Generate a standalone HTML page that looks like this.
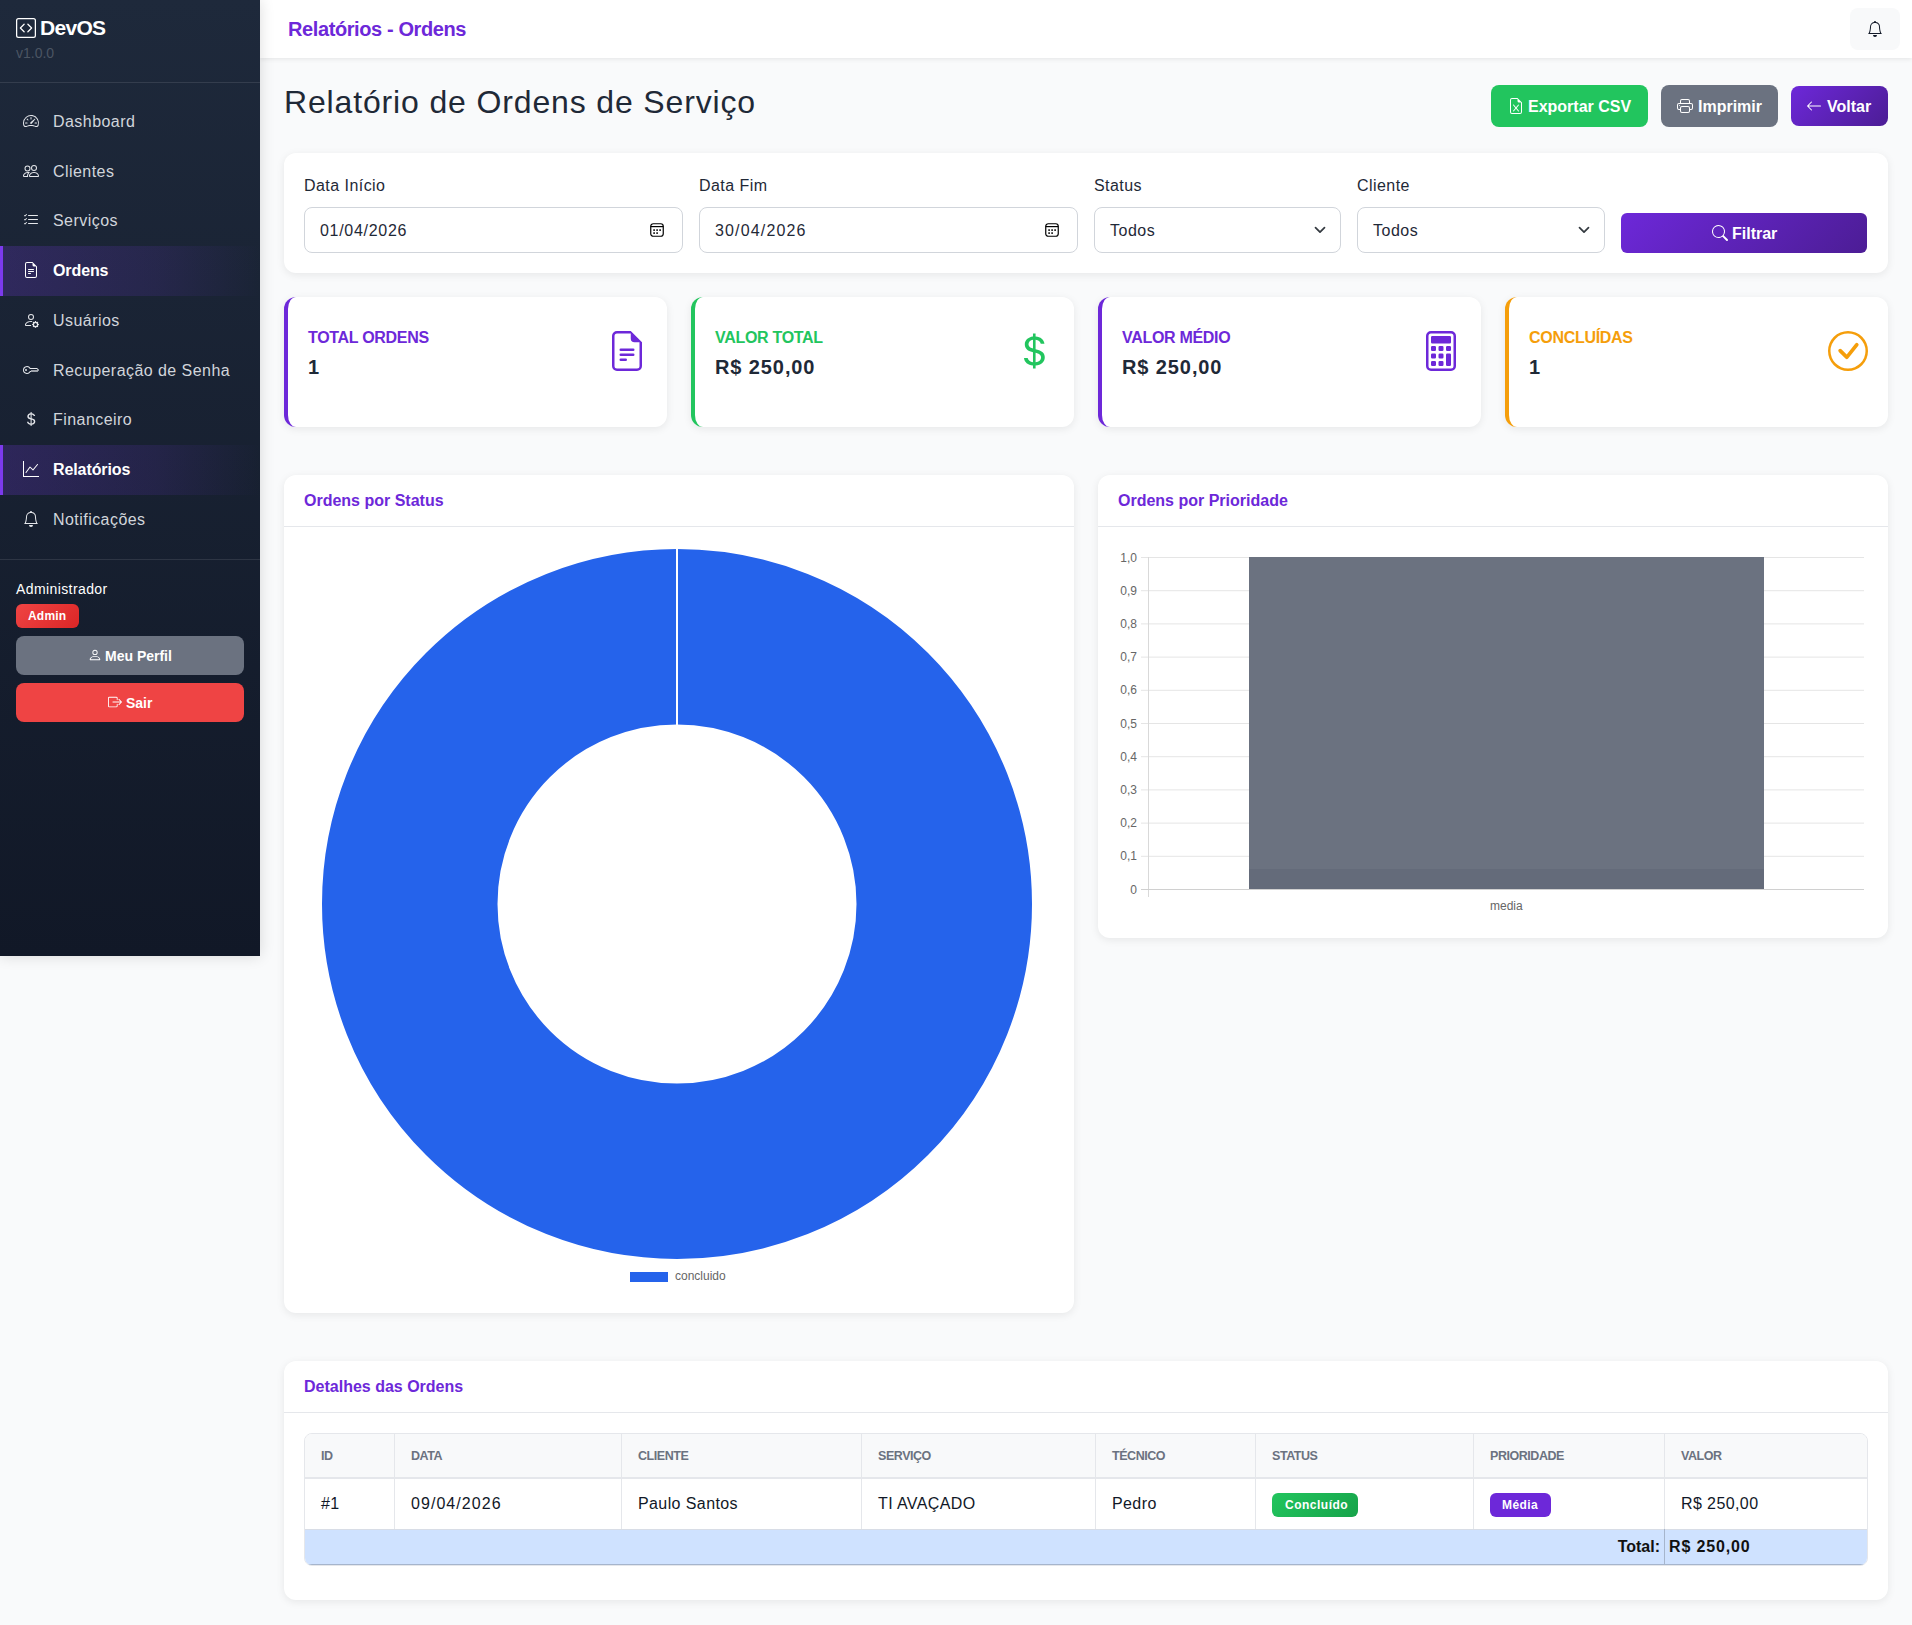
<!DOCTYPE html><html><head><meta charset="utf-8"><style>
*{box-sizing:border-box;margin:0;padding:0}
html,body{width:1912px;height:1625px;overflow:hidden}
body{font-family:"Liberation Sans",sans-serif;background:#f9fafb;color:#1f2937;position:relative}
.abs{position:absolute;white-space:nowrap}
.ic{position:absolute;overflow:visible}
#sb{position:absolute;left:0;top:0;width:260px;height:956px;background:linear-gradient(180deg,#1e293b 0%,#111827 100%);box-shadow:0 0 14px rgba(0,0,0,.14);z-index:5}
.hr{position:absolute;left:0;width:260px;height:1px;background:rgba(255,255,255,.1)}
.nav{position:absolute;left:0;width:260px;height:49.75px;color:#d1d5db;font-size:16px}
.nav .t{position:absolute;left:53px;top:16px;line-height:18px;letter-spacing:.45px;white-space:nowrap}
.nav.act{background:linear-gradient(90deg,rgba(124,58,237,.22) 0%,rgba(124,58,237,.12) 60%,rgba(124,58,237,0) 100%);color:#fff;font-weight:700}
.nav.act .t{letter-spacing:-.1px}
.nav.act:before{content:"";position:absolute;left:0;top:0;width:3px;height:100%;background:#7c3aed}
.btnsb{position:absolute;left:16px;width:228px;height:39px;border-radius:8px;color:#fff;font-size:14px;font-weight:700}
#hd{position:absolute;left:260px;top:0;width:1652px;height:58px;background:#fff;box-shadow:0 1px 5px rgba(0,0,0,.09);z-index:4}
.btn{position:absolute;height:42px;border-radius:8px;color:#fff;font-size:16px;font-weight:700}
.card{position:absolute;background:#fff;border-radius:12px;box-shadow:0 2px 8px rgba(0,0,0,.08)}
.lbl{position:absolute;top:177px;font-size:16px;color:#1f2937;line-height:18px;white-space:nowrap;letter-spacing:.45px}
.inp{position:absolute;top:207px;height:46px;border:1px solid #d1d5db;border-radius:8px;background:#fff}
.inp .v{position:absolute;left:15px;top:14px;font-size:16px;line-height:18px;color:#1f2937;letter-spacing:.7px}
.stat{position:absolute;top:297px;width:383px;height:130px;background:#fff;border-radius:12px;box-shadow:0 2px 8px rgba(0,0,0,.08);overflow:hidden}
.stat .bar{position:absolute;left:0;top:0;width:4px;height:130px}
.stat .l{position:absolute;left:20px;top:32px;font-size:16px;font-weight:700;line-height:18px;white-space:nowrap;letter-spacing:-.3px}
.stat .v{position:absolute;left:20px;top:59px;font-size:20px;font-weight:700;color:#1f2937;line-height:22px;white-space:nowrap;letter-spacing:.9px}
.ch .t{position:absolute;left:20px;top:17px;font-size:16px;font-weight:700;color:#6d28d9;line-height:18px;white-space:nowrap}
.ch .b{position:absolute;left:0;top:51px;width:100%;height:1px;background:#e5e7eb}
.cell{position:absolute;white-space:nowrap}
</style></head><body>
<div id="sb">
<svg class="ic" style="left:16px;top:18px;" width="20" height="20" viewBox="0 0 16 16" fill="#fff"><path d="M14 1a1 1 0 0 1 1 1v12a1 1 0 0 1-1 1H2a1 1 0 0 1-1-1V2a1 1 0 0 1 1-1zM2 0a2 2 0 0 0-2 2v12a2 2 0 0 0 2 2h12a2 2 0 0 0 2-2V2a2 2 0 0 0-2-2z"/><path d="M6.854 4.646a.5.5 0 0 1 0 .708L4.207 8l2.647 2.646a.5.5 0 0 1-.708.708l-3-3a.5.5 0 0 1 0-.708l3-3a.5.5 0 0 1 .708 0m2.292 0a.5.5 0 0 0 0 .708L11.793 8l-2.647 2.646a.5.5 0 0 0 .708.708l3-3a.5.5 0 0 0 0-.708l-3-3a.5.5 0 0 0-.708 0"/></svg>
<div class="abs" style="left:40px;top:16px;font-size:21px;font-weight:700;color:#fff;line-height:24px;letter-spacing:-.7px">DevOS</div>
<div class="abs" style="left:16px;top:45px;font-size:14px;color:#4b5563;line-height:16px">v1.0.0</div>
<div class="hr" style="top:82px"></div>
<div class="nav" style="top:96.75px"><svg class="ic" style="left:23px;top:16px;" width="16" height="16" viewBox="0 0 16 16" fill="#e5e7eb"><path d="M8 4a.5.5 0 0 1 .5.5V6a.5.5 0 0 1-1 0V4.5A.5.5 0 0 1 8 4M3.732 5.732a.5.5 0 0 1 .707 0l.915.914a.5.5 0 1 1-.708.708l-.914-.915a.5.5 0 0 1 0-.707M2 10a.5.5 0 0 1 .5-.5h1.586a.5.5 0 0 1 0 1H2.5A.5.5 0 0 1 2 10m9.5 0a.5.5 0 0 1 .5-.5h1.5a.5.5 0 0 1 0 1H12a.5.5 0 0 1-.5-.5m.754-4.246a.39.39 0 0 0-.527-.02L7.547 9.31a.91.91 0 1 0 1.302 1.258l3.434-4.297a.39.39 0 0 0-.029-.518z"/><path d="M0 10a8 8 0 1 1 15.547 2.661c-.442 1.253-1.845 1.602-2.932 1.25C11.309 13.488 9.475 13 8 13c-1.474 0-3.31.488-4.615.911-1.087.352-2.49.003-2.932-1.25A8 8 0 0 1 0 10m8-7a7 7 0 0 0-6.603 9.329c.203.575.923.876 1.68.63C4.397 12.533 6.358 12 8 12s3.604.532 4.923.96c.757.245 1.477-.056 1.68-.631A7 7 0 0 0 8 3"/></svg><span class="t">Dashboard</span></div>
<div class="nav" style="top:146.5px"><svg class="ic" style="left:23px;top:16px;" width="16" height="16" viewBox="0 0 16 16" fill="#e5e7eb"><path d="M15 14s1 0 1-1-1-4-5-4-5 3-5 4 1 1 1 1zm-7.978-1L7 12.996c.001-.264.167-1.03.76-1.72C8.312 10.629 9.282 10 11 10c1.717 0 2.687.63 3.24 1.276.593.69.758 1.457.76 1.72l-.008.002-.014.002zM11 7a2 2 0 1 0 0-4 2 2 0 0 0 0 4m3-2a3 3 0 1 1-6 0 3 3 0 0 1 6 0M6.936 9.28a6 6 0 0 0-1.23-.247A7 7 0 0 0 5 9c-4 0-5 3-5 4q0 1 1 1h4.216A2.24 2.24 0 0 1 5 13c0-1.01.377-2.042 1.09-2.904.243-.294.526-.569.846-.816M4.92 10A5.5 5.5 0 0 0 4 13H1c0-.26.164-1.03.76-1.724.545-.636 1.492-1.256 3.16-1.275ZM1.5 5.5a3 3 0 1 1 6 0 3 3 0 0 1-6 0m3-2a2 2 0 1 0 0 4 2 2 0 0 0 0-4"/></svg><span class="t">Clientes</span></div>
<div class="nav" style="top:196.25px"><svg class="ic" style="left:23px;top:16px;" width="16" height="16" viewBox="0 0 16 16" fill="#e5e7eb"><path d="M5 11.5a.5.5 0 0 1 .5-.5h9a.5.5 0 0 1 0 1h-9a.5.5 0 0 1-.5-.5m0-4a.5.5 0 0 1 .5-.5h9a.5.5 0 0 1 0 1h-9a.5.5 0 0 1-.5-.5m0-4a.5.5 0 0 1 .5-.5h9a.5.5 0 0 1 0 1h-9a.5.5 0 0 1-.5-.5M3.854 2.146a.5.5 0 0 1 0 .708l-1.5 1.5a.5.5 0 0 1-.708 0l-.5-.5a.5.5 0 1 1 .708-.708L2 3.293l1.146-1.147a.5.5 0 0 1 .708 0m0 4a.5.5 0 0 1 0 .708l-1.5 1.5a.5.5 0 0 1-.708 0l-.5-.5a.5.5 0 1 1 .708-.708L2 7.293l1.146-1.147a.5.5 0 0 1 .708 0m0 4a.5.5 0 0 1 0 .708l-1.5 1.5a.5.5 0 0 1-.708 0l-.5-.5a.5.5 0 0 1 .708-.708l.146.147 1.146-1.147a.5.5 0 0 1 .708 0"/></svg><span class="t">Serviços</span></div>
<div class="nav act" style="top:246.0px"><svg class="ic" style="left:23px;top:16px;" width="16" height="16" viewBox="0 0 16 16" fill="#fff"><path d="M5.5 7a.5.5 0 0 0 0 1h5a.5.5 0 0 0 0-1zM5 9.5a.5.5 0 0 1 .5-.5h5a.5.5 0 0 1 0 1h-5a.5.5 0 0 1-.5-.5m0 2a.5.5 0 0 1 .5-.5h2a.5.5 0 0 1 0 1h-2a.5.5 0 0 1-.5-.5"/><path d="M9.5 0H4a2 2 0 0 0-2 2v12a2 2 0 0 0 2 2h8a2 2 0 0 0 2-2V4.5zm0 1v2A1.5 1.5 0 0 0 11 4.5h2V14a1 1 0 0 1-1 1H4a1 1 0 0 1-1-1V2a1 1 0 0 1 1-1z"/></svg><span class="t">Ordens</span></div>
<div class="nav" style="top:295.75px"><svg class="ic" style="left:23px;top:16px;" width="16" height="16" viewBox="0 0 16 16" fill="#e5e7eb"><path d="M11 5a3 3 0 1 1-6 0 3 3 0 0 1 6 0M8 7a2 2 0 1 0 0-4 2 2 0 0 0 0 4m.256 7a4.5 4.5 0 0 1-.229-1.004H3c.001-.246.154-.986.832-1.664C4.484 10.68 5.711 10 8 10q.39 0 .74.025c.226-.341.496-.65.804-.918Q8.844 9.002 8 9c-5 0-6 3-6 4s1 1 1 1zm3.63-4.54c.18-.613 1.048-.613 1.229 0l.043.148a.64.64 0 0 0 .921.382l.136-.074c.561-.306 1.175.308.87.869l-.075.136a.64.64 0 0 0 .382.92l.149.045c.612.18.612 1.048 0 1.229l-.15.043a.64.64 0 0 0-.38.921l.074.136c.305.561-.309 1.175-.87.87l-.136-.075a.64.64 0 0 0-.92.382l-.045.149c-.18.612-1.048.612-1.229 0l-.043-.15a.64.64 0 0 0-.921-.38l-.136.074c-.561.305-1.175-.309-.87-.87l.075-.136a.64.64 0 0 0-.382-.92l-.148-.045c-.613-.18-.613-1.048 0-1.229l.148-.043a.64.64 0 0 0 .382-.921l-.074-.136c-.306-.561.308-1.175.869-.87l.136.075a.64.64 0 0 0 .92-.382zM14 12.5a1.5 1.5 0 1 0-3 0 1.5 1.5 0 0 0 3 0"/></svg><span class="t">Usuários</span></div>
<div class="nav" style="top:345.5px"><svg class="ic" style="left:23px;top:16px;" width="16" height="16" viewBox="0 0 16 16" fill="#e5e7eb"><path d="M0 8a4 4 0 0 1 7.465-2H14a.5.5 0 0 1 .354.146l1.5 1.5a.5.5 0 0 1 0 .708l-1.5 1.5a.5.5 0 0 1-.708 0L13 9.207l-.646.647a.5.5 0 0 1-.708 0L11 9.207l-.646.647a.5.5 0 0 1-.708 0L9 9.207l-.646.647A.5.5 0 0 1 8 10h-.535A4 4 0 0 1 0 8m4-3a3 3 0 1 0 2.712 4.285A.5.5 0 0 1 7.163 9h.63l.853-.854a.5.5 0 0 1 .708 0l.646.647.646-.647a.5.5 0 0 1 .708 0l.646.647.646-.647a.5.5 0 0 1 .708 0l.646.647.793-.793-1-1h-6.63a.5.5 0 0 1-.451-.285A3 3 0 0 0 4 5"/><path d="M4 8a1 1 0 1 1-2 0 1 1 0 0 1 2 0"/></svg><span class="t">Recuperação de Senha</span></div>
<div class="nav" style="top:395.25px"><svg class="ic" style="left:23px;top:16px;" width="16" height="16" viewBox="0 0 16 16" fill="#e5e7eb"><path d="M4 10.781c.148 1.667 1.513 2.85 3.591 3.003V15h1.043v-1.216c2.27-.179 3.678-1.438 3.678-3.3 0-1.59-.947-2.51-2.956-3.028l-.722-.187V3.467c1.122.11 1.879.714 2.07 1.616h1.47c-.166-1.6-1.54-2.748-3.54-2.875V1H7.591v1.233c-1.939.23-3.27 1.472-3.27 3.156 0 1.454.966 2.483 2.661 2.917l.61.162v4.031c-1.149-.17-1.94-.8-2.131-1.718zm3.391-3.836c-1.043-.263-1.6-.825-1.6-1.616 0-.944.704-1.641 1.8-1.828v3.495l-.2-.05zm1.591 1.872c1.287.323 1.852.859 1.852 1.769 0 1.097-.826 1.828-2.2 1.939V8.73z"/></svg><span class="t">Financeiro</span></div>
<div class="nav act" style="top:445.0px"><svg class="ic" style="left:23px;top:16px;" width="16" height="16" viewBox="0 0 16 16" fill="#fff"><path d="M0 0h1v15h15v1H0zm14.817 3.113a.5.5 0 0 1 .07.704l-4.5 5.5a.5.5 0 0 1-.74.037L7.06 6.767l-3.656 5.027a.5.5 0 0 1-.808-.588l4-5.5a.5.5 0 0 1 .758-.06l2.609 2.61 4.15-5.073a.5.5 0 0 1 .704-.07"/></svg><span class="t">Relatórios</span></div>
<div class="nav" style="top:494.75px"><svg class="ic" style="left:23px;top:16px;" width="16" height="16" viewBox="0 0 16 16" fill="#e5e7eb"><path d="M8 16a2 2 0 0 0 2-2H6a2 2 0 0 0 2 2M8 1.918l-.797.161A4 4 0 0 0 4 6c0 .628-.134 2.197-.459 3.742-.16.767-.376 1.566-.663 2.258h10.244c-.287-.692-.502-1.49-.663-2.258C12.134 8.197 12 6.628 12 6a4 4 0 0 0-3.203-3.92zM14.22 12c.223.447.481.801.78 1H1c.299-.199.557-.553.78-1C2.68 10.2 3 6.88 3 6c0-2.42 1.72-4.44 4.005-4.901a1 1 0 1 1 1.99 0A5 5 0 0 1 13 6c0 .88.32 4.2 1.22 6"/></svg><span class="t">Notificações</span></div>
<div class="hr" style="top:559px"></div>
<div class="abs" style="left:16px;top:581px;font-size:14px;color:#fff;line-height:16px;letter-spacing:.4px">Administrador</div>
<div class="abs" style="left:16px;top:604px;width:63px;height:24px;border-radius:6px;background:linear-gradient(135deg,#ef4444,#dc2626)"></div>
<div class="abs" style="left:28px;top:609px;font-size:12px;font-weight:700;color:#fff;line-height:14px;letter-spacing:.2px">Admin</div>
<div class="btnsb" style="top:636px;background:#6b7280"></div>
<svg class="ic" style="left:88px;top:648px;" width="14" height="14" viewBox="0 0 16 16" fill="#fff"><path d="M8 8a3 3 0 1 0 0-6 3 3 0 0 0 0 6m2-3a2 2 0 1 1-4 0 2 2 0 0 1 4 0m4 8c0 1-1 1-1 1H3s-1 0-1-1 1-4 6-4 6 3 6 4m-1-.004c-.001-.246-.154-.986-.832-1.664C11.516 10.68 10.289 10 8 10s-3.516.68-4.168 1.332c-.678.678-.83 1.418-.832 1.664z"/></svg>
<div class="abs" style="left:105px;top:648px;font-size:14px;font-weight:700;color:#fff;line-height:16px">Meu Perfil</div>
<div class="btnsb" style="top:683px;background:#ef4444"></div>
<svg class="ic" style="left:108px;top:695px;" width="14" height="14" viewBox="0 0 16 16" fill="#fff"><path d="M10 12.5a.5.5 0 0 1-.5.5h-8a.5.5 0 0 1-.5-.5v-9a.5.5 0 0 1 .5-.5h8a.5.5 0 0 1 .5.5v2a.5.5 0 0 0 1 0v-2A1.5 1.5 0 0 0 9.5 2h-8A1.5 1.5 0 0 0 0 3.5v9A1.5 1.5 0 0 0 1.5 14h8a1.5 1.5 0 0 0 1.5-1.5v-2a.5.5 0 0 0-1 0z"/><path d="M15.854 8.354a.5.5 0 0 0 0-.708l-3-3a.5.5 0 0 0-.708.708L14.293 7.5H5.5a.5.5 0 0 0 0 1h8.793l-2.147 2.146a.5.5 0 0 0 .708.708z"/></svg>
<div class="abs" style="left:126px;top:695px;font-size:14px;font-weight:700;color:#fff;line-height:16px">Sair</div>
</div>
<div id="hd">
<div class="abs" style="left:28px;top:18px;font-size:20px;font-weight:700;color:#6d28d9;line-height:22px;letter-spacing:-.4px">Relatórios - Ordens</div>
<div class="abs" style="left:1590px;top:8px;width:50px;height:42px;background:#f8f9fa;border-radius:8px"></div>
<svg class="ic" style="left:1607px;top:21px;" width="16" height="16" viewBox="0 0 16 16" fill="#111827"><path d="M8 16a2 2 0 0 0 2-2H6a2 2 0 0 0 2 2M8 1.918l-.797.161A4 4 0 0 0 4 6c0 .628-.134 2.197-.459 3.742-.16.767-.376 1.566-.663 2.258h10.244c-.287-.692-.502-1.49-.663-2.258C12.134 8.197 12 6.628 12 6a4 4 0 0 0-3.203-3.92zM14.22 12c.223.447.481.801.78 1H1c.299-.199.557-.553.78-1C2.68 10.2 3 6.88 3 6c0-2.42 1.72-4.44 4.005-4.901a1 1 0 1 1 1.99 0A5 5 0 0 1 13 6c0 .88.32 4.2 1.22 6"/></svg>
</div>
<div class="abs" style="left:284px;top:83px;font-size:32px;color:#1f2937;line-height:38px;letter-spacing:.85px">Relatório de Ordens de Serviço</div>
<div class="btn" style="left:1491px;top:85px;width:157px;background:#22c55e"></div>
<svg class="ic" style="left:1508px;top:98px;" width="16" height="16" viewBox="0 0 16 16" fill="#fff"><path d="M5.884 6.68a.5.5 0 1 0-.768.64L7.349 10l-2.233 2.68a.5.5 0 0 0 .768.64L8 10.781l2.116 2.54a.5.5 0 0 0 .768-.641L8.651 10l2.233-2.68a.5.5 0 0 0-.768-.64L8 9.219l-2.116-2.54z"/><path d="M14 14V4.5L9.5 0H4a2 2 0 0 0-2 2v12a2 2 0 0 0 2 2h8a2 2 0 0 0 2-2M9.5 3A1.5 1.5 0 0 0 11 4.5h2V14a1 1 0 0 1-1 1H4a1 1 0 0 1-1-1V2a1 1 0 0 1 1-1h5.5z"/></svg>
<div class="abs" style="left:1528px;top:98px;font-size:16px;font-weight:700;color:#fff;line-height:18px">Exportar CSV</div>
<div class="btn" style="left:1661px;top:85px;width:117px;background:#6b7280"></div>
<svg class="ic" style="left:1677px;top:98px;" width="16" height="16" viewBox="0 0 16 16" fill="#fff"><path d="M2.5 8a.5.5 0 1 0 0-1 .5.5 0 0 0 0 1"/><path d="M5 1a2 2 0 0 0-2 2v2H2a2 2 0 0 0-2 2v3a2 2 0 0 0 2 2h1v1a2 2 0 0 0 2 2h6a2 2 0 0 0 2-2v-1h1a2 2 0 0 0 2-2V7a2 2 0 0 0-2-2h-1V3a2 2 0 0 0-2-2zM4 3a1 1 0 0 1 1-1h6a1 1 0 0 1 1 1v2H4zm1 5a2 2 0 0 0-2 2v1H2a1 1 0 0 1-1-1V7a1 1 0 0 1 1-1h12a1 1 0 0 1 1 1v3a1 1 0 0 1-1 1h-1v-1a2 2 0 0 0-2-2zm7 2v3a1 1 0 0 1-1 1H5a1 1 0 0 1-1-1v-3a1 1 0 0 1 1-1h6a1 1 0 0 1 1 1"/></svg>
<div class="abs" style="left:1698px;top:98px;font-size:16px;font-weight:700;color:#fff;line-height:18px">Imprimir</div>
<div class="btn" style="left:1791px;top:86px;width:97px;height:40px;background:linear-gradient(135deg,#6d28d9,#4c1d95)"></div>
<svg class="ic" style="left:1806px;top:98px;" width="16" height="16" viewBox="0 0 16 16" fill="#fff"><path d="M15 8a.5.5 0 0 0-.5-.5H2.707l3.147-3.146a.5.5 0 1 0-.708-.708l-4 4a.5.5 0 0 0 0 .708l4 4a.5.5 0 0 0 .708-.708L2.707 8.5H14.5A.5.5 0 0 0 15 8"/></svg>
<div class="abs" style="left:1827px;top:98px;font-size:16px;font-weight:700;color:#fff;line-height:18px">Voltar</div>
<div class="card" style="left:284px;top:153px;width:1604px;height:120px"></div>
<div class="lbl" style="left:304px">Data Início</div>
<div class="lbl" style="left:699px">Data Fim</div>
<div class="lbl" style="left:1094px">Status</div>
<div class="lbl" style="left:1357px">Cliente</div>
<div class="inp" style="left:304px;width:379px"><div class="v">01/04/2026</div></div>
<svg class="ic" style="left:650px;top:223px" width="14" height="14" viewBox="0 0 14 14"><rect x="0.75" y="0.75" width="12.5" height="12.5" rx="2.5" fill="none" stroke="#000" stroke-width="1.2"/><line x1="0.75" y1="3.6" x2="13.25" y2="3.6" stroke="#000" stroke-width="1.2"/><rect x="3.3" y="6.3" width="1.6" height="1.6" fill="#000"/><rect x="6.3" y="6.3" width="1.6" height="1.6" fill="#000"/><rect x="9.3" y="6.3" width="1.6" height="1.6" fill="#000"/><rect x="3.3" y="9.3" width="1.6" height="1.6" fill="#000"/><rect x="6.3" y="9.3" width="1.6" height="1.6" fill="#000"/></svg>
<div class="inp" style="left:699px;width:379px"><div class="v" style="letter-spacing:1.15px">30/04/2026</div></div>
<svg class="ic" style="left:1045px;top:223px" width="14" height="14" viewBox="0 0 14 14"><rect x="0.75" y="0.75" width="12.5" height="12.5" rx="2.5" fill="none" stroke="#000" stroke-width="1.2"/><line x1="0.75" y1="3.6" x2="13.25" y2="3.6" stroke="#000" stroke-width="1.2"/><rect x="3.3" y="6.3" width="1.6" height="1.6" fill="#000"/><rect x="6.3" y="6.3" width="1.6" height="1.6" fill="#000"/><rect x="9.3" y="6.3" width="1.6" height="1.6" fill="#000"/><rect x="3.3" y="9.3" width="1.6" height="1.6" fill="#000"/><rect x="6.3" y="9.3" width="1.6" height="1.6" fill="#000"/></svg>
<div class="inp" style="left:1094px;width:247px"><div class="v" style="letter-spacing:.5px">Todos</div></div>
<svg class="ic" style="left:1314px;top:226px" width="12" height="8" viewBox="0 0 12 8"><path d="M1.5 1.7L6 6.2L10.5 1.7" fill="none" stroke="#343a40" stroke-width="1.7" stroke-linecap="round" stroke-linejoin="round"/></svg>
<div class="inp" style="left:1357px;width:248px"><div class="v" style="letter-spacing:.5px">Todos</div></div>
<svg class="ic" style="left:1578px;top:226px" width="12" height="8" viewBox="0 0 12 8"><path d="M1.5 1.7L6 6.2L10.5 1.7" fill="none" stroke="#343a40" stroke-width="1.7" stroke-linecap="round" stroke-linejoin="round"/></svg>
<div class="btn" style="left:1621px;top:213px;width:246px;height:40px;border-radius:6px;background:linear-gradient(135deg,#6d28d9,#4c1d95)"></div>
<svg class="ic" style="left:1712px;top:225px;" width="16" height="16" viewBox="0 0 16 16" fill="#fff"><path d="M11.742 10.344a6.5 6.5 0 1 0-1.397 1.398h-.001q.044.06.098.115l3.85 3.85a1 1 0 0 0 1.415-1.414l-3.85-3.85a1 1 0 0 0-.115-.1zM12 6.5a5.5 5.5 0 1 1-11 0 5.5 5.5 0 0 1 11 0"/></svg>
<div class="abs" style="left:1732px;top:225px;font-size:16px;font-weight:700;color:#fff;line-height:18px">Filtrar</div>
<div class="stat" style="left:284px;border-left:4px solid #6d28d9"><div class="l" style="color:#6d28d9">TOTAL ORDENS</div><div class="v">1</div></div>
<svg class="ic" style="left:607px;top:331px;z-index:2" width="40" height="40" viewBox="0 0 16 16" fill="#6d28d9"><path d="M5.5 7a.5.5 0 0 0 0 1h5a.5.5 0 0 0 0-1zM5 9.5a.5.5 0 0 1 .5-.5h5a.5.5 0 0 1 0 1h-5a.5.5 0 0 1-.5-.5m0 2a.5.5 0 0 1 .5-.5h2a.5.5 0 0 1 0 1h-2a.5.5 0 0 1-.5-.5"/><path d="M9.5 0H4a2 2 0 0 0-2 2v12a2 2 0 0 0 2 2h8a2 2 0 0 0 2-2V4.5zm0 1v2A1.5 1.5 0 0 0 11 4.5h2V14a1 1 0 0 1-1 1H4a1 1 0 0 1-1-1V2a1 1 0 0 1 1-1z"/></svg>
<div class="stat" style="left:691px;border-left:4px solid #22c55e"><div class="l" style="color:#22c55e">VALOR TOTAL</div><div class="v">R$ 250,00</div></div>
<svg class="ic" style="left:1014px;top:331px;z-index:2" width="40" height="40" viewBox="0 0 16 16" fill="#22c55e"><path d="M4 10.781c.148 1.667 1.513 2.85 3.591 3.003V15h1.043v-1.216c2.27-.179 3.678-1.438 3.678-3.3 0-1.59-.947-2.51-2.956-3.028l-.722-.187V3.467c1.122.11 1.879.714 2.07 1.616h1.47c-.166-1.6-1.54-2.748-3.54-2.875V1H7.591v1.233c-1.939.23-3.27 1.472-3.27 3.156 0 1.454.966 2.483 2.661 2.917l.61.162v4.031c-1.149-.17-1.94-.8-2.131-1.718zm3.391-3.836c-1.043-.263-1.6-.825-1.6-1.616 0-.944.704-1.641 1.8-1.828v3.495l-.2-.05zm1.591 1.872c1.287.323 1.852.859 1.852 1.769 0 1.097-.826 1.828-2.2 1.939V8.73z"/></svg>
<div class="stat" style="left:1098px;border-left:4px solid #6d28d9"><div class="l" style="color:#6d28d9">VALOR MÉDIO</div><div class="v">R$ 250,00</div></div>
<svg class="ic" style="left:1421px;top:331px;z-index:2" width="40" height="40" viewBox="0 0 16 16" fill="#6d28d9"><path d="M12 1a1 1 0 0 1 1 1v12a1 1 0 0 1-1 1H4a1 1 0 0 1-1-1V2a1 1 0 0 1 1-1zM4 0a2 2 0 0 0-2 2v12a2 2 0 0 0 2 2h8a2 2 0 0 0 2-2V2a2 2 0 0 0-2-2z"/><path d="M4 2.5a.5.5 0 0 1 .5-.5h7a.5.5 0 0 1 .5.5v2a.5.5 0 0 1-.5.5h-7a.5.5 0 0 1-.5-.5zm0 4a.5.5 0 0 1 .5-.5h1a.5.5 0 0 1 .5.5v1a.5.5 0 0 1-.5.5h-1a.5.5 0 0 1-.5-.5zm0 3a.5.5 0 0 1 .5-.5h1a.5.5 0 0 1 .5.5v1a.5.5 0 0 1-.5.5h-1a.5.5 0 0 1-.5-.5zm0 3a.5.5 0 0 1 .5-.5h1a.5.5 0 0 1 .5.5v1a.5.5 0 0 1-.5.5h-1a.5.5 0 0 1-.5-.5zm3-6a.5.5 0 0 1 .5-.5h1a.5.5 0 0 1 .5.5v1a.5.5 0 0 1-.5.5h-1a.5.5 0 0 1-.5-.5zm0 3a.5.5 0 0 1 .5-.5h1a.5.5 0 0 1 .5.5v1a.5.5 0 0 1-.5.5h-1a.5.5 0 0 1-.5-.5zm0 3a.5.5 0 0 1 .5-.5h1a.5.5 0 0 1 .5.5v1a.5.5 0 0 1-.5.5h-1a.5.5 0 0 1-.5-.5zm3-6a.5.5 0 0 1 .5-.5h1a.5.5 0 0 1 .5.5v1a.5.5 0 0 1-.5.5h-1a.5.5 0 0 1-.5-.5zm0 3a.5.5 0 0 1 .5-.5h1a.5.5 0 0 1 .5.5v4a.5.5 0 0 1-.5.5h-1a.5.5 0 0 1-.5-.5z"/></svg>
<div class="stat" style="left:1505px;border-left:4px solid #f59e0b"><div class="l" style="color:#f59e0b">CONCLUÍDAS</div><div class="v">1</div></div>
<svg class="ic" style="left:1828px;top:331px;z-index:2" width="40" height="40" viewBox="0 0 16 16" fill="#f59e0b"><path d="M8 15A7 7 0 1 1 8 1a7 7 0 0 1 0 14m0 1A8 8 0 1 0 8 0a8 8 0 0 0 0 16"/><path d="m10.97 4.97-.02.022-3.473 4.425-2.093-2.094a.75.75 0 0 0-1.06 1.06L6.97 11.03a.75.75 0 0 0 1.079-.02l3.992-4.99a.75.75 0 0 0-1.071-1.05"/></svg>
<div class="card ch" style="left:284px;top:475px;width:790px;height:838px"><div class="t">Ordens por Status</div><div class="b"></div></div>
<svg class="ic" style="left:0;top:0;z-index:2" width="1912" height="1625"><circle cx="677" cy="904" r="267.25" fill="none" stroke="#2563eb" stroke-width="175.5"/><line x1="677" y1="548" x2="677" y2="725.5" stroke="#fff" stroke-width="2"/></svg>
<div class="abs" style="left:630px;top:1272px;width:38px;height:10px;background:#2563eb;z-index:2"></div>
<div class="abs" style="left:675px;top:1269px;font-size:12px;color:#666;line-height:14px;z-index:2">concluido</div>
<div class="card ch" style="left:1098px;top:475px;width:790px;height:463px"><div class="t">Ordens por Prioridade</div><div class="b"></div></div>
<svg class="ic" style="left:0;top:0;z-index:2" width="1912" height="1625">
<line x1="1141" y1="889.50" x2="1864" y2="889.50" stroke="#e5e5e5" stroke-width="1"/>
<line x1="1141" y1="856.30" x2="1864" y2="856.30" stroke="#e5e5e5" stroke-width="1"/>
<line x1="1141" y1="823.10" x2="1864" y2="823.10" stroke="#e5e5e5" stroke-width="1"/>
<line x1="1141" y1="789.90" x2="1864" y2="789.90" stroke="#e5e5e5" stroke-width="1"/>
<line x1="1141" y1="756.70" x2="1864" y2="756.70" stroke="#e5e5e5" stroke-width="1"/>
<line x1="1141" y1="723.50" x2="1864" y2="723.50" stroke="#e5e5e5" stroke-width="1"/>
<line x1="1141" y1="690.30" x2="1864" y2="690.30" stroke="#e5e5e5" stroke-width="1"/>
<line x1="1141" y1="657.10" x2="1864" y2="657.10" stroke="#e5e5e5" stroke-width="1"/>
<line x1="1141" y1="623.90" x2="1864" y2="623.90" stroke="#e5e5e5" stroke-width="1"/>
<line x1="1141" y1="590.70" x2="1864" y2="590.70" stroke="#e5e5e5" stroke-width="1"/>
<line x1="1141" y1="557.50" x2="1864" y2="557.50" stroke="#e5e5e5" stroke-width="1"/>
<line x1="1148.5" y1="557" x2="1148.5" y2="897" stroke="#d9d9d9" stroke-width="1"/>
<line x1="1141" y1="889.5" x2="1864" y2="889.5" stroke="#d0d0d0" stroke-width="1"/>
<rect x="1249" y="557" width="515" height="332" fill="#6b7280"/>
<rect x="1249" y="869" width="515" height="20" fill="#646b7a"/>
</svg>
<div class="abs" style="left:1037px;top:882.50px;width:100px;text-align:right;font-size:12px;color:#666;line-height:14px;z-index:2">0</div>
<div class="abs" style="left:1037px;top:849.30px;width:100px;text-align:right;font-size:12px;color:#666;line-height:14px;z-index:2">0,1</div>
<div class="abs" style="left:1037px;top:816.10px;width:100px;text-align:right;font-size:12px;color:#666;line-height:14px;z-index:2">0,2</div>
<div class="abs" style="left:1037px;top:782.90px;width:100px;text-align:right;font-size:12px;color:#666;line-height:14px;z-index:2">0,3</div>
<div class="abs" style="left:1037px;top:749.70px;width:100px;text-align:right;font-size:12px;color:#666;line-height:14px;z-index:2">0,4</div>
<div class="abs" style="left:1037px;top:716.50px;width:100px;text-align:right;font-size:12px;color:#666;line-height:14px;z-index:2">0,5</div>
<div class="abs" style="left:1037px;top:683.30px;width:100px;text-align:right;font-size:12px;color:#666;line-height:14px;z-index:2">0,6</div>
<div class="abs" style="left:1037px;top:650.10px;width:100px;text-align:right;font-size:12px;color:#666;line-height:14px;z-index:2">0,7</div>
<div class="abs" style="left:1037px;top:616.90px;width:100px;text-align:right;font-size:12px;color:#666;line-height:14px;z-index:2">0,8</div>
<div class="abs" style="left:1037px;top:583.70px;width:100px;text-align:right;font-size:12px;color:#666;line-height:14px;z-index:2">0,9</div>
<div class="abs" style="left:1037px;top:550.50px;width:100px;text-align:right;font-size:12px;color:#666;line-height:14px;z-index:2">1,0</div>
<div class="abs" style="left:1490px;top:899px;font-size:12px;color:#666;line-height:14px;z-index:2">media</div>
<div class="card ch" style="left:284px;top:1361px;width:1604px;height:239px"><div class="t">Detalhes das Ordens</div><div class="b"></div></div>
<div class="abs" style="left:304px;top:1433px;width:1564px;height:133px;border:1px solid #e5e7eb;border-radius:8px;overflow:hidden;background:#fff;z-index:2">
<div class="abs" style="left:0;top:0;width:1564px;height:45px;background:#f8f9fa"></div>
<div class="abs" style="left:0;top:43px;width:1564px;height:2px;background:#e5e7eb"></div>
<div class="abs" style="left:0;top:95px;width:1564px;height:37px;background:#cfe2ff"></div>
<div class="abs" style="left:0;top:95px;width:1564px;height:1px;background:#d8dde6"></div>
<div class="abs" style="left:0;top:130px;width:1564px;height:1px;background:#a6b5cc"></div>
<div class="abs" style="left:89px;top:0;width:1px;height:95px;background:#e5e7eb"></div>
<div class="abs" style="left:316px;top:0;width:1px;height:95px;background:#e5e7eb"></div>
<div class="abs" style="left:556px;top:0;width:1px;height:95px;background:#e5e7eb"></div>
<div class="abs" style="left:790px;top:0;width:1px;height:95px;background:#e5e7eb"></div>
<div class="abs" style="left:950px;top:0;width:1px;height:95px;background:#e5e7eb"></div>
<div class="abs" style="left:1168px;top:0;width:1px;height:95px;background:#e5e7eb"></div>
<div class="abs" style="left:1359px;top:0;width:1px;height:95px;background:#e5e7eb"></div>
<div class="abs" style="left:1359px;top:95px;width:1px;height:37px;background:#a6b5cc"></div>
</div>
<div class="abs" style="left:321px;top:1449px;font-size:12.5px;font-weight:700;color:#6b7280;line-height:14px;letter-spacing:-.45px;z-index:3">ID</div>
<div class="abs" style="left:411px;top:1449px;font-size:12.5px;font-weight:700;color:#6b7280;line-height:14px;letter-spacing:-.45px;z-index:3">DATA</div>
<div class="abs" style="left:638px;top:1449px;font-size:12.5px;font-weight:700;color:#6b7280;line-height:14px;letter-spacing:-.45px;z-index:3">CLIENTE</div>
<div class="abs" style="left:878px;top:1449px;font-size:12.5px;font-weight:700;color:#6b7280;line-height:14px;letter-spacing:-.45px;z-index:3">SERVIÇO</div>
<div class="abs" style="left:1112px;top:1449px;font-size:12.5px;font-weight:700;color:#6b7280;line-height:14px;letter-spacing:-.45px;z-index:3">TÉCNICO</div>
<div class="abs" style="left:1272px;top:1449px;font-size:12.5px;font-weight:700;color:#6b7280;line-height:14px;letter-spacing:-.45px;z-index:3">STATUS</div>
<div class="abs" style="left:1490px;top:1449px;font-size:12.5px;font-weight:700;color:#6b7280;line-height:14px;letter-spacing:-.45px;z-index:3">PRIORIDADE</div>
<div class="abs" style="left:1681px;top:1449px;font-size:12.5px;font-weight:700;color:#6b7280;line-height:14px;letter-spacing:-.45px;z-index:3">VALOR</div>
<div class="abs" style="left:321px;top:1495px;font-size:16px;color:#111827;line-height:18px;letter-spacing:.4px;z-index:3">#1</div>
<div class="abs" style="left:411px;top:1495px;font-size:16px;color:#111827;line-height:18px;letter-spacing:1.05px;z-index:3">09/04/2026</div>
<div class="abs" style="left:638px;top:1495px;font-size:16px;color:#111827;line-height:18px;letter-spacing:.4px;z-index:3">Paulo Santos</div>
<div class="abs" style="left:878px;top:1495px;font-size:16px;color:#111827;line-height:18px;letter-spacing:.4px;z-index:3">TI AVAÇADO</div>
<div class="abs" style="left:1112px;top:1495px;font-size:16px;color:#111827;line-height:18px;letter-spacing:.4px;z-index:3">Pedro</div>
<div class="abs" style="left:1681px;top:1495px;font-size:16px;color:#111827;line-height:18px;letter-spacing:.4px;z-index:3">R$ 250,00</div>
<div class="abs" style="left:1272px;top:1493px;width:86px;height:24px;border-radius:6px;background:linear-gradient(135deg,#22c55e,#16a34a);z-index:3"></div>
<div class="abs" style="left:1285px;top:1498px;font-size:12px;font-weight:700;color:#fff;line-height:14px;letter-spacing:.5px;z-index:3">Concluído</div>
<div class="abs" style="left:1490px;top:1493px;width:61px;height:24px;border-radius:6px;background:#6d28d9;z-index:3"></div>
<div class="abs" style="left:1502px;top:1498px;font-size:12px;font-weight:700;color:#fff;line-height:14px;letter-spacing:.4px;z-index:3">Média</div>
<div class="abs" style="left:1560px;top:1538px;font-size:16px;font-weight:700;color:#111;line-height:18px;z-index:3"><div style="width:100px;text-align:right">Total:</div></div>
<div class="abs" style="left:1669px;top:1538px;font-size:16px;font-weight:700;color:#111;line-height:18px;letter-spacing:.85px;z-index:3">R$ 250,00</div>
</body></html>
